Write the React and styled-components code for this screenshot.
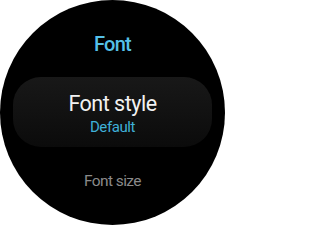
import React from "react";
import styled, { createGlobalStyle } from "styled-components";

const Global = createGlobalStyle`
  html, body { margin: 0; padding: 0; background: #ffffff; }
  body { font-family: Roboto, "Noto Sans", sans-serif; }
`;

const Watch = styled.div`
  width: 225px;
  height: 225px;
  border-radius: 50%;
  background: #000;
  overflow: hidden;
  display: flex;
  flex-direction: column;
  align-items: center;
  padding-top: 34px;
  box-sizing: border-box;
`;

const Title = styled.div`
  font-size: 20px;
  line-height: 20px;
  font-weight: 500;
  color: #55c0e8;
  letter-spacing: -0.8px;
`;

const Item = styled.div`
  margin-top: 23px;
  width: 199px;
  height: 70px;
  box-sizing: border-box;
  border-radius: 28px;
  background: linear-gradient(180deg, #181818 0%, #111111 55%, #0b0b0b 100%);
  display: flex;
  flex-direction: column;
  align-items: center;
  padding-top: 16px;
`;

const Primary = styled.div`
  font-size: 21.5px;
  line-height: 21px;
  color: #f2f2f2;
  letter-spacing: -0.5px;
`;

const Secondary = styled.div`
  margin-top: 6px;
  font-size: 15px;
  line-height: 15px;
  color: ${(p) => p.$color};
  letter-spacing: -0.4px;
`;

const NextItem = styled.div`
  margin-top: 27px;
  font-size: 15.5px;
  line-height: 15px;
  color: #8a8a8a;
  letter-spacing: -0.6px;
`;

export default function App() {
  return (
    <>
      <Global />
      <Watch>
        <Title>Font</Title>
        <Item>
          <Primary>Font style</Primary>
          <Secondary $color="#3fb0d8">Default</Secondary>
        </Item>
        <NextItem>Font size</NextItem>
      </Watch>
    </>
  );
}
